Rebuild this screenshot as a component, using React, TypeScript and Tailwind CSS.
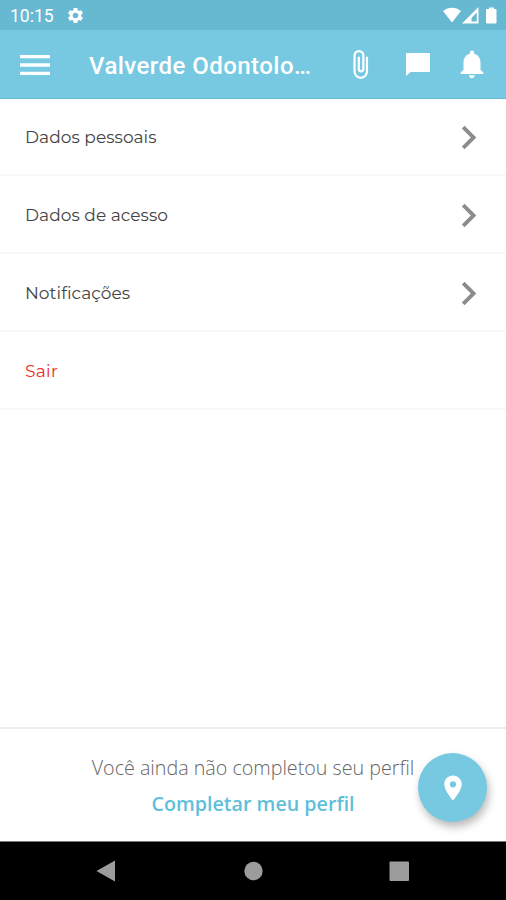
import { MdChevronRight, MdLocationOn, MdMenu, MdNotifications, MdSettings } from "react-icons/md"

const items = ["Dados pessoais", "Dados de acesso", "Notificações"]

function StatusBar() {
  return (
    <div className="flex h-[30px] items-center bg-[#67b8d1] pr-2 pl-2.5 text-white">
      <span className="mt-[3px] w-[56px] font-[Roboto] text-[17.5px] leading-none">10:15</span>
      <MdSettings className="size-[19px]" />
      <svg className="ml-auto h-[17px] w-[56px]" viewBox="0 0 56 17" fill="currentColor">
        <path d="M1 4C6-.5 14-.5 19 4L10 15.500z" />
        <path d="M36.500 0v16.500H20zM34.700 5.500L29.500 11v3.500h5.200z" fillRule="evenodd" />
        <path d="M47 2V.5h5V2h1.500q1 0 1 1v12.500q0 1-1 1h-8.500q-1 0-1-1V3q0-1 1-1z" />
      </svg>
    </div>
  )
}

function Header() {
  return (
    <header className="flex h-[69px] items-center border-b border-[#67b8d1] bg-[#77c9e2] text-white">
      <MdMenu className="mt-px ml-[15px] size-10 shrink-0" />
      <h1 className="ml-[34px] w-[256px] pt-[3px] font-[Roboto] text-[24px] font-medium tracking-[0.45px] whitespace-nowrap">
        Valverde Odontolo…
      </h1>
      <svg
        className="size-[31px] shrink-0"
        viewBox="0 0 24 24"
        fill="none"
        stroke="currentColor"
        strokeWidth="1.7"
      >
        <path d="M17 6v11.500a4.800 4.800 0 0 1-9.600 0V5a3.400 3.400 0 0 1 6.800 0v10.500a1.750 1.750 0 0 1-3.500 0V6" />
      </svg>
      <svg className="ml-[30px] h-[23px] w-6 shrink-0" viewBox="0 0 24 23" fill="currentColor">
        <path d="M1 0h22q1 0 1 1v17q0 1-1 1H4.500L0 23V1q0-1 1-1z" />
      </svg>
      <MdNotifications className="ml-[25px] size-[34px] shrink-0" />
    </header>
  )
}

function BottomNav() {
  return (
    <nav className="h-[59px] border-t border-[#777] bg-black">
      <svg className="h-[58px] w-full" viewBox="0 0 506 58" fill="#9c9c9c">
        <path d="M96.500 29L115 18.500v21z" />
        <circle cx="253.500" cy="29" r="9.200" />
        <rect x="389.500" y="19.500" width="19.500" height="19.500" rx="1" />
      </svg>
    </nav>
  )
}

export default function App() {
  return (
    <div className="relative flex h-[900px] w-[506px] flex-col overflow-hidden bg-white">
      <StatusBar />
      <Header />
      <main className="flex-1 font-[Montserrat,Lato,sans-serif] text-[17px] tracking-[0.05px] text-[#444]">
        {items.map((item) => (
          <div
            key={item}
            className="flex h-[78px] items-center justify-between border-b-2 border-[#f8f8f8] pr-[14px] pl-[25px] first:h-[77px]"
          >
            <span className="mt-[3px]">{item}</span>
            <MdChevronRight className="mt-0.5 size-[47px] text-[#8c8c8c]" />
          </div>
        ))}
        <div className="flex h-[78px] items-center border-b-2 border-[#f8f8f8] pt-[3px] pl-[25px] tracking-[0.3px] text-[#ef2b23]">
          Sair
        </div>
      </main>
      <footer className="flex h-[114px] flex-col items-center border-t-2 border-[#ececec] pt-[25px] font-['Open_Sans',sans-serif] leading-[28px]">
        <p className="text-[19.7px] font-light text-[#666]">Você ainda não completou seu perfil</p>
        <a className="mt-2 text-[19.7px] font-semibold text-[#5fbfda]">Completar meu perfil</a>
      </footer>
      <BottomNav />
      <button className="absolute top-[753px] left-[418px] flex size-[69px] items-center justify-center rounded-full bg-[#77c9e2] text-white shadow-[2px_5px_9px_rgba(0,0,0,0.28)]">
        <MdLocationOn className="size-[30px]" />
      </button>
    </div>
  )
}
